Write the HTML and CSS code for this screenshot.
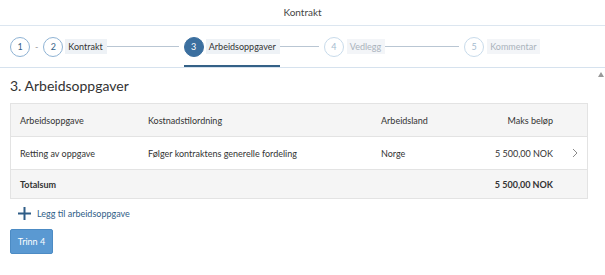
FILE: index.html
```html
<!DOCTYPE html>
<html lang="no">
<head>
    <meta charset="UTF-8">
    <title>Kontrakt</title>
    <link rel="stylesheet" href="styles.css">
</head>
<body>
    <div class="topbar">Kontrakt</div>

    <div class="steps">
        <div class="step done"><span class="circle">1</span></div>
        <span class="dash">-</span>
        <div class="step done"><span class="circle">2</span><span class="label">Kontrakt</span></div>
        <span class="line line-a"></span>
        <div class="step active"><span class="circle">3</span><span class="label">Arbeidsoppgaver</span></div>
        <span class="line line-b"></span>
        <div class="step todo"><span class="circle">4</span><span class="label">Vedlegg</span></div>
        <span class="line line-c"></span>
        <div class="step todo"><span class="circle">5</span><span class="label">Kommentar</span></div>
    </div>

    <div class="content">
        <span class="scroll-arrow"></span>
        <h2>3. Arbeidsoppgaver</h2>

        <table class="tasks">
            <thead>
                <tr>
                    <th class="c1">Arbeidsoppgave</th>
                    <th class="c2">Kostnadstilordning</th>
                    <th class="c3">Arbeidsland</th>
                    <th class="c4 num">Maks beløp</th>
                    <th class="c5"></th>
                </tr>
            </thead>
            <tbody>
                <tr>
                    <td>Retting av oppgave</td>
                    <td>Følger kontraktens generelle fordeling</td>
                    <td>Norge</td>
                    <td class="num">5 500,00 NOK</td>
                    <td class="nav">
                        <svg width="6" height="10" viewBox="0 0 6 10"><path d="M1 1 L5 5 L1 9" fill="none" stroke="#8a8a8a" stroke-width="1"/></svg>
                    </td>
                </tr>
                <tr class="total">
                    <td>Totalsum</td>
                    <td></td>
                    <td></td>
                    <td class="num">5 500,00 NOK</td>
                    <td></td>
                </tr>
            </tbody>
        </table>

        <a class="add-link" href="#">
            <svg width="13" height="13" viewBox="0 0 13 13"><path d="M6.5 0 V13 M0 6.5 H13" stroke="#2f5d87" stroke-width="2"/></svg>
            Legg til arbeidsoppgave
        </a>

        <button class="next">Trinn 4</button>
    </div>
</body>
</html>
```

FILE: styles.css
```css
/* Global */
body {
    font-family: 'Lato', 'Liberation Sans', sans-serif;
    margin: 0;
    padding: 0;
    background-color: #fff;
    color: #333;
    font-size: 9px;
}

.topbar {
    height: 25px;
    line-height: 24px;
    text-align: center;
    font-size: 10px;
    color: #444;
    border-bottom: 1px solid #dce6f0;
}

/* Steps */
.steps {
    display: flex;
    align-items: center;
    height: 41px;
    padding-left: 10px;
    border-bottom: 1px solid #d6e2ee;
}

.step {
    display: flex;
    align-items: center;
    height: 100%;
    box-sizing: border-box;
}

.circle {
    width: 18px;
    height: 18px;
    border: 1px solid #8fb3d4;
    border-radius: 50%;
    display: flex;
    align-items: center;
    justify-content: center;
    font-size: 9px;
    color: #346187;
    background-color: #fff;
}

.label {
    background-color: #eef2f6;
    padding: 2px 4px 2px 3px;
    margin-left: 2px;
    line-height: 11px;
    font-size: 9px;
    color: #333;
}

.dash {
    color: #999;
    margin: 0 5px 0 5px;
    font-size: 9px;
}

.step.active {
    border-bottom: 2px solid #346187;
    padding-top: 2px;
}

.step.active .circle {
    background-color: #3b6f9f;
    border-color: #3b6f9f;
    color: #fff;
}

.step.todo .circle {
    border-color: #c8dbeb;
    color: #a6bcd0;
}

.step.todo .label {
    color: #aab3bc;
    background-color: #f3f5f8;
    margin-left: 3px;
}

.line {
    height: 1px;
    background-color: #b9c6d3;
}

.line-a { width: 72px; margin: 0 5px 0 0; }
.line-b { width: 39px; margin: 0 5px 0 0; }
.line-c { width: 74px; margin: 0 5px 0 0; }

/* Content */
.content {
    position: relative;
    padding: 0 17px 0 10px;
}

.scroll-arrow {
    position: absolute;
    right: 1px;
    top: 4px;
    width: 0;
    height: 0;
    border-left: 3px solid transparent;
    border-right: 3px solid transparent;
    border-bottom: 5px solid #999;
}

h2 {
    font-size: 14px;
    font-weight: normal;
    margin: 0;
    padding: 9px 0 9px 0;
    color: #333;
}

.tasks {
    width: 578px;
    border-collapse: collapse;
    border: 1px solid #e3e3e3;
}

.tasks th, .tasks td {
    text-align: left;
    font-weight: normal;
    padding: 0 0 0 9px;
    height: 32px;
    border-bottom: 1px solid #e3e3e3;
    color: #333;
}

.tasks thead tr {
    background-color: #f5f5f5;
}

.tasks th.c1 { width: 119px; }
.tasks th.c2 { width: 224px; }
.tasks th.c3 { width: 100px; }
.tasks th.c5 { width: 16px; }

.tasks .num {
    text-align: right;
    padding: 0 9px 0 0;
}

.tasks td.nav {
    padding: 0 0 0 10px;
}

.tasks td.nav svg {
    display: block;
}

.tasks tr.total {
    background-color: #f5f5f5;
}

.tasks tr.total td {
    font-weight: bold;
    height: 28px;
}

.add-link {
    display: flex;
    align-items: center;
    gap: 6px;
    margin: 8px 0 0 8px;
    color: #2f5d87;
    text-decoration: none;
    font-size: 9px;
}

.next {
    display: block;
    margin-top: 9px;
    width: 43px;
    height: 25px;
    background-color: #5a99d2;
    border: 1px solid #4c8bc4;
    border-radius: 2px;
    color: #fff;
    font-family: 'Lato', 'Liberation Sans', sans-serif;
    font-size: 9px;
    padding: 0;
    cursor: pointer;
}
```
